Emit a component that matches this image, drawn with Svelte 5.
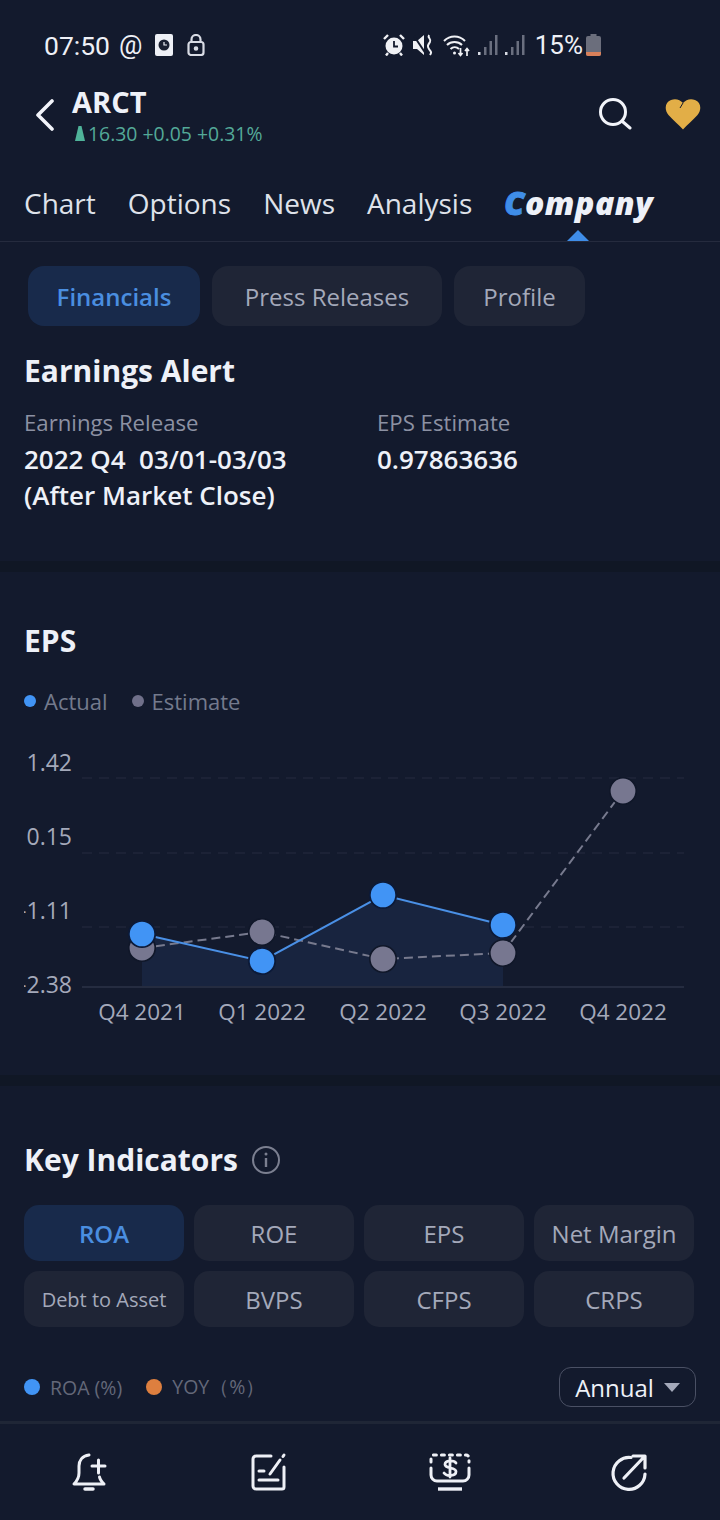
<script lang="ts">
  const tabs = ['Chart', 'Options', 'News', 'Analysis'];
  const pills = ['Financials', 'Press Releases', 'Profile'];
  const indicators = ['ROA', 'ROE', 'EPS', 'Net Margin', 'Debt to Asset', 'BVPS', 'CFPS', 'CRPS'];

  const xs = [142, 262, 383, 503, 623];
  const actual = [934, 961, 895, 925];
  const estimate = [948, 932, 959, 953, 791];
  const top = 740;
  const base = 987;
  const grid = [778, 853, 927];
  const yLabels = [
    { text: '1.42', y: 771 },
    { text: '0.15', y: 845 },
    { text: '-1.11', y: 919 },
    { text: '-2.38', y: 993 }
  ];
  const xLabels = ['Q4 2021', 'Q1 2022', 'Q2 2022', 'Q3 2022', 'Q4 2022'];

  const pts = (ys: number[]) => ys.map((y, i) => `${xs[i]},${y - top}`).join(' ');
  const area = `${xs[0]},${base - top} ${pts(actual)} ${xs[3]},${base - top}`;
</script>

<div class="screen">
  <div class="status">
    <div class="status-left">
      <span class="clock">07:50</span>
      <span class="at">@</span>
      <svg width="18" height="22" viewBox="0 0 18 22"><rect x="0" y="0" width="18" height="22" rx="2" fill="#eef0f6" /><circle cx="9" cy="11" r="5.5" fill="#1a2030" /><path d="M9 8v3h3" stroke="#eef0f6" stroke-width="1.2" fill="none" /></svg>
      <svg class="lock" width="18" height="22" viewBox="0 0 18 22" fill="none" stroke="#d8dbe4" stroke-width="2.2"><rect x="1.5" y="8" width="15" height="13" rx="2.5" /><path d="M4.5 8V5.5a4.5 4.5 0 0 1 9 0V8" /><circle cx="9" cy="14.5" r="1.2" fill="#d8dbe4" /></svg>
    </div>
    <div class="status-right">
      <svg width="22" height="22" viewBox="0 0 22 22"><circle cx="11" cy="12" r="8.5" fill="#f0f1f5" /><path d="M11 7v5.5h4" stroke="#131a2d" stroke-width="1.8" fill="none" /><path d="M1 5l4-4M21 5l-4-4M5 19l-2 2.5M17 19l2 2.5" stroke="#f0f1f5" stroke-width="2.4" /></svg>
      <svg class="mute" width="22" height="22" viewBox="0 0 22 22"><path d="M0 7h4l7-6v20l-7-6H0z" fill="#f0f1f5" /><path d="M1 2l12 18" stroke="#131a2d" stroke-width="2" /><path d="M16 1c-2 3 3 4 1 7s-3 4-1 7 3 3 1 6" stroke="#f0f1f5" stroke-width="2" fill="none" /></svg>
      <svg class="wifi" width="28" height="24" viewBox="0 0 28 24" fill="none" stroke="#f0f1f5" stroke-width="2"><path d="M1 8c6-6 15-6 21 0" /><path d="M4 12c4-4 11-4 15 0" /><path d="M7.500 16c2.500-2.500 6-2.500 8.500 0" /><circle cx="11.500" cy="20" r="1.500" fill="#f0f1f5" stroke="none" /><path d="M17.500 15v7M15.500 20l2 2.500 2-2.500M24 23v-7M22 18l2-2.500 2 2.500" stroke-width="1.700" /></svg>
      <svg class="signal" width="20" height="22" viewBox="0 0 20 22"><rect x="0" y="18" width="2.500" height="3" fill="#d8dbe4" /><rect x="6" y="13" width="2.500" height="8" fill="#6a6f7f" /><rect x="11.500" y="7" width="2.500" height="14" fill="#6a6f7f" /><rect x="17" y="1" width="2.500" height="20" fill="#6a6f7f" /></svg>
      <svg class="signal" width="20" height="22" viewBox="0 0 20 22"><rect x="0" y="18" width="2.500" height="3" fill="#d8dbe4" /><rect x="6" y="13" width="2.500" height="8" fill="#6a6f7f" /><rect x="11.500" y="7" width="2.500" height="14" fill="#6a6f7f" /><rect x="17" y="1" width="2.500" height="20" fill="#6a6f7f" /></svg>
      <span class="pct">15%</span>
      <svg class="battery" width="15" height="22" viewBox="0 0 15 22"><path d="M4.500 0h6v2h2.500a2 2 0 0 1 2 2v16a2 2 0 0 1-2 2H2a2 2 0 0 1-2-2V4a2 2 0 0 1 2-2h2.500z" fill="#6b6e7c" /><path d="M0 18h15v2a2 2 0 0 1-2 2H2a2 2 0 0 1-2-2z" fill="#d9805a" /></svg>
    </div>
  </div>

  <header class="head">
    <svg class="back" width="20" height="32" viewBox="0 0 20 32" fill="none" stroke="#f2f4fa" stroke-width="3.600" stroke-linecap="round" stroke-linejoin="round"><path d="M17 2L3 16l14 14" /></svg>
    <div class="ticker">
      <div class="symbol">ARCT</div>
      <div class="quote">
        <svg width="10" height="15" viewBox="0 0 10 15"><path d="M3.500 0h3L10 15H0z" fill="#4fb39a" /></svg>
        <span>16.30 +0.05 +0.31%</span>
      </div>
    </div>
    <div class="head-actions">
      <svg width="34" height="34" viewBox="0 0 34 34" fill="none" stroke="#f2f4fa" stroke-width="3" stroke-linecap="round"><circle cx="15" cy="15" r="12.500" /><path d="M24.500 24.500L32 31" /></svg>
      <svg width="36" height="32" viewBox="0 0 36 32"><path d="M18 31.500C14 27 8 22 3.500 17 -1 12 0 4 6 2 11 0 15 2 18 5 21 2 25 0 30 2 36 4 37 12 32.500 17 28 22 22 27 18 31.500Z" fill="#e2ae47" /><path d="M18 5l-3 5" stroke="#131a2d" stroke-width="1" /></svg>
    </div>
  </header>

  <nav class="tabs">
    {#each tabs as t}
      <span class="tab">{t}</span>
    {/each}
    <span class="tab active"><em>C</em>ompany</span>
    <i class="caret"></i>
  </nav>

  <main class="content">
    <section class="alert">
      <div class="pills">
        {#each pills as p, i}
          <button class="pill" class:on={i === 0}>{p}</button>
        {/each}
      </div>
      <h2>Earnings Alert</h2>
      <div class="alert-cols">
        <div class="col-a">
          <div class="lbl">Earnings Release</div>
          <div class="val">2022 Q4&nbsp;&nbsp;03/01-03/03<br />(After Market Close)</div>
        </div>
        <div>
          <div class="lbl">EPS Estimate</div>
          <div class="val">0.97863636</div>
        </div>
      </div>
    </section>

    <section class="eps">
      <h2>EPS</h2>
      <div class="legend">
        <span class="key"><i class="dot blue"></i>Actual</span>
        <span class="key"><i class="dot grey"></i>Estimate</span>
      </div>
      <svg class="chart" width="720" height="300" viewBox="0 0 720 300">
        <defs>
          <clipPath id="axis-clip"><rect x="24" y="0" width="60" height="300" /></clipPath>
        </defs>
        {#each grid as g}
          <line x1="82" x2="684" y1={g - top} y2={g - top} stroke="#20263a" stroke-width="1.500" stroke-dasharray="10 7" />
        {/each}
        <polygon points={area} fill="#18243f" />
        <line x1="82" x2="684" y1={base - top} y2={base - top} stroke="#252c40" stroke-width="2" />
        <g clip-path="url(#axis-clip)">
          {#each yLabels as l}
            <text class="axis" x="72" y={l.y - top} text-anchor="end">{l.text}</text>
          {/each}
        </g>
        {#each xLabels as l, i}
          <text class="axis x" x={xs[i]} y={1020 - top} text-anchor="middle">{l}</text>
        {/each}
        <polyline points={pts(estimate)} fill="none" stroke="#777a8e" stroke-width="2" stroke-dasharray="9 5" />
        <polyline points={pts(actual)} fill="none" stroke="#4a90e6" stroke-width="2" />
        {#each estimate as y, i}
          <circle cx={xs[i]} cy={y - top} r="13.200" fill="#777790" stroke="#101729" stroke-width="1.600" />
        {/each}
        {#each actual as y, i}
          <circle cx={xs[i]} cy={y - top} r="13.200" fill="#4194f5" stroke="#0c1a38" stroke-width="1.800" />
        {/each}
      </svg>
    </section>

    <section class="indicators">
      <div class="title-row">
        <h2>Key Indicators</h2>
        <svg width="28" height="28" viewBox="0 0 28 28" fill="none" stroke="#7b7f90" stroke-width="2"><circle cx="14" cy="14" r="13" /><path d="M14 12v9" stroke-width="2.400" /><circle cx="14" cy="8" r="1.500" fill="#7b7f90" stroke="none" /></svg>
      </div>
      <div class="ind-grid">
        {#each indicators as n, i}
          <button class="ind" class:on={i === 0} class:small={n === 'Debt to Asset'}>{n}</button>
        {/each}
      </div>
      <div class="series-row">
        <span class="series"><i class="sdot blue"></i>ROA (%)</span>
        <span class="series"><i class="sdot orange"></i>YOY（%）</span>
        <span class="select">Annual<i class="tri"></i></span>
      </div>
    </section>
  </main>

  <footer class="bottom">
    <svg width="40" height="40" viewBox="0 0 40 40" fill="none" stroke="#eef0f6" stroke-width="3" stroke-linecap="round" stroke-linejoin="round"><path d="M19 3c-7 1-10 6-10 11v7c0 5-2 8-5 11h30c-2-2-4-4-4.500-7" /><path d="M22 14h13M28.500 8v13" /><path d="M15 37h8" stroke-width="3.500" /></svg>
    <svg width="40" height="40" viewBox="0 0 40 40" fill="none" stroke="#eef0f6" stroke-width="3" stroke-linecap="round" stroke-linejoin="round"><path d="M21 4H6a3 3 0 0 0-3 3v27a3 3 0 0 0 3 3h26a2 2 0 0 0 2-2V15" /><path d="M9 19h5M9 28h19M20 22l10-14M34 3l-1 1.500" /></svg>
    <svg width="42" height="40" viewBox="0 0 42 40" fill="none" stroke="#eef0f6" stroke-width="3" stroke-linecap="round" stroke-linejoin="round"><path d="M2 10V6a3 3 0 0 1 3-3h32a3 3 0 0 1 3 3v4" stroke-dasharray="3 5" /><path d="M2 16v7a6 6 0 0 0 6 6h26a6 6 0 0 0 6-6v-7" /><path d="M9 37h24" stroke-width="3.400" stroke-linecap="butt" /><path d="M27 11c-2-3-11-3-11 1.500S27 15 27 19.500 18 25 15 21M21 6v19" stroke-width="2.800" /></svg>
    <svg width="40" height="40" viewBox="0 0 40 40" fill="none" stroke="#eef0f6" stroke-width="3.200" stroke-linecap="round" stroke-linejoin="round"><path d="M21 5.500A16 16 0 1 0 35 22" /><path d="M14 26L34 5M23 4h12v12" /></svg>
  </footer>
</div>

<style>
  :global(body) {
    margin: 0;
    background: #131a2d;
  }

  .screen {
    width: 720px;
    height: 1520px;
    display: flex;
    flex-direction: column;
    overflow: hidden;
    background: #131a2d;
    font-family: 'Open Sans', 'Noto Sans', sans-serif;
    color: #eef1f8;
  }

  .status {
    height: 40px;
    margin-top: 25px;
    padding: 0 119px 0 44px;
    display: flex;
    justify-content: space-between;
    align-items: center;
    font-family: Roboto, sans-serif;
    color: #eef0f6;
  }

  .status-left,
  .status-right {
    display: flex;
    align-items: center;
  }

  .clock {
    font-size: 26.500px;
    margin-right: 9px;
  }

  .at {
    font-size: 26px;
    margin-right: 13px;
  }

  .lock {
    margin-left: 14px;
  }

  .mute,
  .wifi {
    margin-left: 8px;
  }

  .signal {
    margin-left: 7px;
  }

  .pct {
    font-size: 26px;
    margin-left: 10px;
  }

  .battery {
    margin-left: 3px;
  }

  .head {
    margin-top: 19px;
    height: 63px;
    display: flex;
    align-items: center;
    padding: 0 19px 0 35px;
  }

  .back {
    margin-top: -2px;
  }

  .ticker {
    margin-left: 17px;
    flex: 1;
  }

  .symbol {
    font-size: 29px;
    font-weight: 700;
    line-height: 36px;
  }

  .quote {
    display: flex;
    align-items: center;
    gap: 3px;
    color: #53a998;
    font-size: 19.400px;
    line-height: 27px;
    margin-left: 3px;
  }

  .head-actions {
    display: flex;
    align-items: center;
    gap: 33px;
    margin-top: -3px;
  }

  .tabs {
    position: relative;
    height: 94px;
    box-sizing: content-box;
    padding-left: 24px;
    display: flex;
    gap: 32px;
    align-items: flex-start;
    border-bottom: 1px solid #252b3e;
  }

  .tab {
    margin-top: 37px;
    font-size: 28px;
    line-height: 38px;
    color: #dfe2ea;
  }

  .tab.active {
    font-size: 32px;
    font-weight: 800;
    font-style: italic;
    letter-spacing: 0.500px;
    color: #eef1f8;
  }

  .tab em {
    color: #3f8de8;
    -webkit-text-stroke: 1px #3f8de8;
  }

  .caret {
    position: absolute;
    left: 567px;
    bottom: 0;
    border-left: 11px solid transparent;
    border-right: 11px solid transparent;
    border-bottom: 11px solid #3f8de8;
  }

  .content {
    flex: 1;
    min-height: 0;
    overflow: hidden;
    background: #101725;
    display: flex;
    flex-direction: column;
    gap: 11px;
  }

  section {
    background: #131a2d;
  }

  h2 {
    margin: 0;
    font-size: 30px;
    font-weight: 700;
    line-height: 40px;
  }

  .alert {
    height: 319px;
    padding: 24px 24px 0;
    box-sizing: border-box;
  }

  .pills {
    display: flex;
    gap: 12px;
    padding-left: 4px;
    margin-bottom: 25px;
  }

  button {
    border: none;
    font-family: inherit;
    padding: 0;
  }

  .pill {
    width: 172px;
    height: 60px;
    border-radius: 16px;
    font-size: 24px;
    background: #1f2536;
    color: #a4a9ba;
  }

  .pill:nth-child(2) {
    width: 230px;
  }

  .pill:nth-child(3) {
    width: 131px;
  }

  .pill.on {
    background: #182a4b;
    color: #4a8ee0;
    font-weight: 600;
  }

  .alert-cols {
    display: flex;
    margin-top: 17px;
  }

  .col-a {
    width: 353px;
  }

  .lbl {
    font-size: 22.200px;
    line-height: 30px;
    color: #8c91a3;
  }

  .val {
    margin-top: 3px;
    font-size: 26px;
    font-weight: 600;
    line-height: 36px;
  }

  .eps {
    height: 503px;
    padding-top: 49px;
    box-sizing: border-box;
  }

  .eps h2 {
    padding-left: 24px;
  }

  .legend {
    display: flex;
    gap: 24px;
    padding-left: 24px;
    margin-top: 25px;
    font-size: 22px;
    line-height: 30px;
    color: #747a8d;
  }

  .key {
    display: flex;
    align-items: center;
    gap: 8px;
  }

  .dot {
    width: 12px;
    height: 12px;
    border-radius: 50%;
  }

  .blue {
    background: #4194f5;
  }

  .grey {
    background: #70708a;
  }

  .orange {
    background: #dd7f3f;
  }

  .chart {
    display: block;
    margin-top: 24px;
  }

  .axis {
    font-size: 23px;
    fill: #a4a9ba;
  }

  .axis.x {
    font-size: 22.500px;
  }

  .indicators {
    flex: 1;
    padding: 54px 24px 0;
    box-sizing: border-box;
  }

  .title-row {
    display: flex;
    align-items: center;
    gap: 14px;
  }

  .ind-grid {
    display: grid;
    grid-template-columns: repeat(4, 160px);
    grid-auto-rows: 56px;
    gap: 10px;
    margin-top: 25px;
  }

  .ind {
    border-radius: 15px;
    background: #1f2536;
    color: #a4a9ba;
    font-size: 24px;
  }

  .ind.small {
    font-size: 20px;
  }

  .ind.on {
    background: #182a4b;
    color: #4a8ee0;
    font-weight: 600;
  }

  .series-row {
    display: flex;
    align-items: center;
    gap: 24px;
    margin-top: 40px;
    height: 40px;
    font-size: 19.500px;
    color: #636879;
  }

  .series {
    display: flex;
    align-items: center;
    gap: 10px;
  }

  .sdot {
    width: 16px;
    height: 16px;
    border-radius: 50%;
  }

  .select {
    margin-left: auto;
    width: 137px;
    height: 40px;
    box-sizing: border-box;
    border: 1px solid #4a5064;
    border-radius: 12px;
    display: flex;
    align-items: center;
    justify-content: center;
    gap: 10px;
    font-size: 24px;
    color: #eef1f8;
  }

  .tri {
    border-left: 8px solid transparent;
    border-right: 8px solid transparent;
    border-top: 9px solid #a4a9ba;
  }

  .bottom {
    height: 99px;
    box-sizing: border-box;
    border-top: 3px solid #1f2636;
    background: #131a2d;
    display: grid;
    grid-template-columns: repeat(4, 180px);
    justify-items: center;
    align-items: center;
  }
</style>
